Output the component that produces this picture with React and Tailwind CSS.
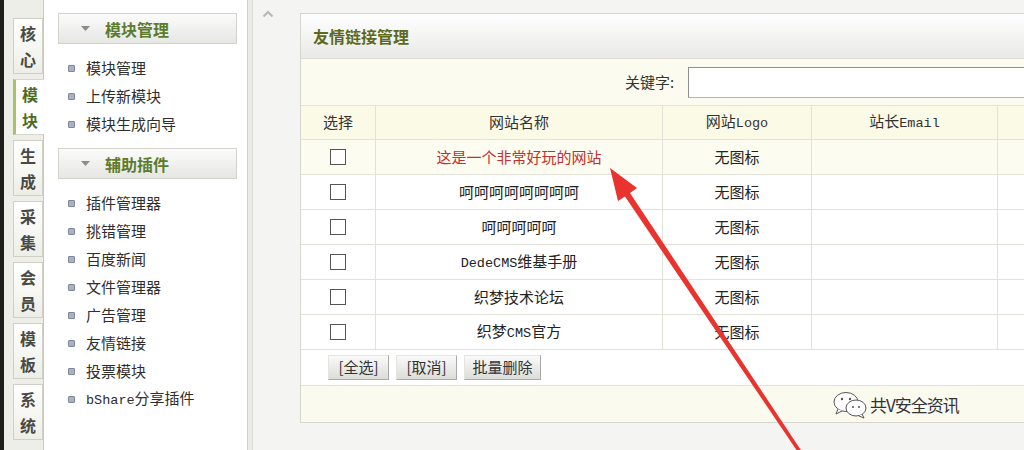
import React from 'react';

const tabs = [
  ['核', '心'],
  ['模', '块'],
  ['生', '成'],
  ['采', '集'],
  ['会', '员'],
  ['模', '板'],
  ['系', '统'],
];

const groups = [
  { title: '模块管理', items: ['模块管理', '上传新模块', '模块生成向导'] },
  {
    title: '辅助插件',
    items: ['插件管理器', '挑错管理', '百度新闻', '文件管理器', '广告管理', '友情链接', '投票模块', 'bShare分享插件'],
  },
];

const links = [
  { name: '这是一个非常好玩的网站', hot: true },
  { name: '呵呵呵呵呵呵呵呵' },
  { name: '呵呵呵呵呵' },
  { name: 'DedeCMS维基手册' },
  { name: '织梦技术论坛' },
  { name: '织梦CMS官方' },
];

const cols = 'grid grid-cols-[75px_287px_149px_186px_1fr]';
const cell = 'flex items-center justify-center border-r border-[#e2e2d8]';

// latin runs look like the old half-width song font
const withLatin = (text) => (
  <span className="whitespace-nowrap">
    {text.split(/([A-Za-z]+)/).map((part, i) =>
      /^[A-Za-z]+$/.test(part) ? (
        <span key={i} className="font-['Liberation_Mono',monospace] text-[13.5px]">{part}</span>
      ) : (
        part
      )
    )}
  </span>
);

const SideHeader = ({ title }) => (
  <div className="w-[179px] h-[31px] flex items-center pl-[22px] gap-[15px] border border-[#d3d3cc] bg-gradient-to-b from-[#fbfbfb] to-[#e6e6e3] mb-[10px]">
    <svg width="9" height="5" viewBox="0 0 9 5"><path d="M0 0h9L4.5 5z" fill="#8d8d88" /></svg>
    <span className="text-[16px] font-bold text-[#5c7c2c]">{title}</span>
  </div>
);

const Button = ({ children, w }) => (
  <button className={`h-[25px] ${w} flex items-center justify-center text-[15px] text-[#333] bg-gradient-to-b from-[#fafafa] to-[#dcdcd8] border border-[#e4e4e0] border-r-[#aaa] border-b-[#aaa]`}>
    {children}
  </button>
);

export default function App() {
  return (
    <div className="relative w-[1024px] h-[450px] overflow-hidden flex bg-[#f4f4f2] font-['Noto_Sans_CJK_SC','Noto_Sans',sans-serif] text-[#333]">
      <div className="w-[4px] shrink-0 bg-[#1f1e1a]" />

      <div className="w-[40px] shrink-0 bg-[#eeeee9] border-r border-[#c9c9c0] pt-[18px] pl-[9px] flex flex-col gap-[5px]">
        {tabs.map((t, i) => (
          <div
            key={i}
            className={
              i === 1
                ? 'w-[31px] h-[56px] flex flex-col items-center justify-center bg-white border-l-[3px] border-[#a9c26a] border-y border-y-[#d6d6cc] text-[#4f6a22] text-[16px] font-bold leading-[26px]'
                : 'w-[30px] h-[56px] flex flex-col items-center justify-center bg-gradient-to-b from-white to-[#eeeee8] border border-[#cfcfc6] text-[#4a4a44] text-[16px] font-bold leading-[26px]'
            }
          >
            <span>{t[0]}</span>
            <span>{t[1]}</span>
          </div>
        ))}
      </div>

      <div className="w-[204px] shrink-0 bg-white border-r border-[#d2d2ca] pt-[13px] pl-[14px]">
        {groups.map((g) => (
          <div key={g.title}>
            <SideHeader title={g.title} />
            <ul className="mb-[10px]">
              {g.items.map((it) => (
                <li key={it} className="h-[28px] flex items-center pl-[10px] gap-[11px] text-[15px] text-[#2e2e2e]">
                  <span className="w-[7px] h-[7px] rounded-[1px] bg-[#aab2c2] border border-[#7f8898]" />
                  {withLatin(it)}
                </li>
              ))}
            </ul>
          </div>
        ))}
      </div>

      <div className="w-[5px] shrink-0 bg-[#ebebe5] border-r border-[#dcdcd4]" />

      <div className="flex-1 flex pt-[13px] bg-[#f4f4f2]">
        <div className="w-[47px] shrink-0 pl-[9px]">
          <svg width="12" height="8" viewBox="0 0 12 8" className="mt-[-3px]">
            <path d="M1.5 6.5 6 2l4.5 4.5" fill="none" stroke="#b8b8b8" strokeWidth="2" />
          </svg>
        </div>

        <div className="w-[780px] shrink-0 self-start border border-[#d6d6cf] bg-white">
          <div className="h-[45px] flex items-center pl-[12px] border-b border-[#dcdcd4] bg-gradient-to-b from-white to-[#e9e9e6]">
            <span className="text-[16px] font-bold text-[#5d6a1c]">友情链接管理</span>
          </div>

          <div className="h-[47px] flex items-center pl-[324px] gap-[14px] bg-[#fbfbef] border-b border-[#e2e2d6]">
            <span className="shrink-0 whitespace-nowrap text-[15px] text-[#333]">关键字:</span>
            <div className="w-[400px] shrink-0 h-[31px] bg-white border border-[#b5b5b0] border-t-[#8e8e8a] border-l-[#8e8e8a]" />
          </div>

          <div className={`${cols} h-[34px] bg-[#fafae7] border-b border-[#e2e2d8] text-[15px] text-[#333]`}>
            <div className={cell}>选择</div>
            <div className={cell}>网站名称</div>
            <div className={cell}>{withLatin('网站Logo')}</div>
            <div className={cell}>{withLatin('站长Email')}</div>
            <div />
          </div>

          {links.map((l, i) => (
            <div
              key={l.name}
              className={`${cols} h-[35px] border-b border-[#e2e2d8] text-[15px] ${i === 0 ? 'bg-[#fcfcf0]' : 'bg-white'}`}
            >
              <div className={cell}>
                <span className="w-[16px] h-[16px] bg-white border-[1.5px] border-[#555]" />
              </div>
              <div className={`${cell} ${l.hot ? 'text-[#c2302c]' : 'text-[#222]'}`}>{withLatin(l.name)}</div>
              <div className={`${cell} text-[#222]`}>无图标</div>
              <div className={cell} />
              <div />
            </div>
          ))}

          <div className="h-[36px] flex items-center pl-[27px] gap-[7px] border-b border-[#e2e2d8]">
            <Button w="w-[61px]">[全选]</Button>
            <Button w="w-[61px]">[取消]</Button>
            <Button w="w-[77px]">批量删除</Button>
          </div>

          <div className="h-[36px] bg-[#fafaee]" />
        </div>
      </div>

      {/* watermark */}
      <div className="absolute left-[832px] top-[390px] flex items-center gap-[2px] pointer-events-none">
        <svg width="36" height="30" viewBox="0 0 36 30">
          <ellipse cx="14" cy="12" rx="12" ry="9.5" fill="white" stroke="#555" strokeWidth="1" />
          <path d="M6 19l-2 5 6-3" fill="white" stroke="#555" strokeWidth="1" />
          <ellipse cx="24" cy="18" rx="10" ry="8" fill="white" stroke="#555" strokeWidth="1" />
          <path d="M30 24l2 4-5-2" fill="white" stroke="#555" strokeWidth="1" />
          <circle cx="10" cy="9" r="1.2" fill="#555" />
          <circle cx="18" cy="9" r="1.2" fill="#555" />
          <circle cx="21" cy="17" r="1" fill="#555" />
          <circle cx="27" cy="17" r="1" fill="#555" />
        </svg>
        <span className="text-[17px] text-[#333] tracking-[-1px] [text-shadow:0_0_2px_white]">共V安全资讯</span>
      </div>

      {/* red arrow drawn on the screenshot */}
      <svg className="absolute inset-0 pointer-events-none" width="1024" height="450" viewBox="0 0 1024 450">
        <polygon
          points="610,168 637,188 630,193 801.5,451 798.5,453 625,196.5 618,201"
          fill="#e8332f"
        />
      </svg>
    </div>
  );
}
